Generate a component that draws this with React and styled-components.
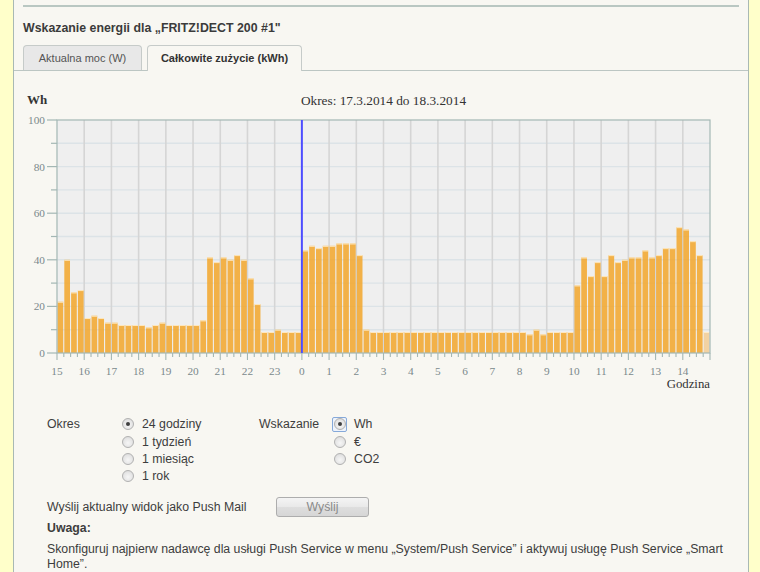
import React from 'react';
import styled, { createGlobalStyle } from 'styled-components';

const GlobalStyle = createGlobalStyle`
  html, body {
    margin: 0;
    padding: 0;
    background: #ffffca;
  }
  body {
    font-family: 'Liberation Sans', Arial, sans-serif;
  }
`;

const Page = styled.div`
  display: flex;
  height: 572px;
  overflow: hidden;
`;

const Strip = styled.div`
  flex: 0 0 ${props => props.width}px;
  background: #ffffca;
`;

const Main = styled.div`
  flex: 1;
  display: flex;
  flex-direction: column;
  background: #f8f7f2;
  border-left: 1px solid #a9b9b4;
  border-right: 1px solid #a9b9b4;
`;

const TopRule = styled.div`
  height: 2px;
  margin: 5px 9px 0;
  background: #b9c7c2;
`;

const Title = styled.h1`
  margin: 14px 9px 0;
  font-size: 12.35px;
  line-height: 15px;
  font-weight: bold;
  color: #3b3b3b;
`;

const TabBar = styled.div`
  display: flex;
  align-items: flex-end;
  gap: 5px;
  height: 25px;
  margin-top: 9px;
  padding-left: 9px;
  border-bottom: 1px solid #bcc6c3;
`;

const Tab = styled.div`
  box-sizing: border-box;
  width: ${props => props.width}px;
  height: ${props => (props.active ? 26 : 25)}px;
  margin-bottom: ${props => (props.active ? -1 : 0)}px;
  display: flex;
  align-items: center;
  justify-content: center;
  padding-bottom: ${props => (props.active ? 1 : 0)}px;
  font-size: 11px;
  font-weight: ${props => (props.active ? 'bold' : 'normal')};
  color: ${props => (props.active ? '#333' : '#555')};
  background: ${props => (props.active ? '#f8f7f2' : '#e8e8e8')};
  border: 1px solid #c6cbc9;
  border-bottom: none;
  border-radius: 4px 4px 0 0;
`;

const ChartBox = styled.div`
  padding-top: 9px;

  svg {
    display: block;
  }
`;

const Form = styled.div`
  padding: 20px 9px 0 33px;
  color: #3d3d3d;
  font-size: 12.3px;
`;

const OptionRow = styled.div`
  display: flex;
`;

const OptionGroup = styled.div`
  display: flex;
  width: ${props => props.width || 'auto'};
`;

const GroupLabel = styled.div`
  flex: 0 0 73px;
  height: 17.3px;
  line-height: 17.3px;
`;

const OptionList = styled.div`
  display: flex;
  flex-direction: column;
`;

const Option = styled.label`
  display: flex;
  align-items: center;
  gap: 7px;
  height: 17.3px;
`;

const RadioSlot = styled.span`
  box-sizing: border-box;
  width: 15px;
  height: 15px;
  display: flex;
  align-items: center;
  justify-content: center;
  border: 1px solid ${props => (props.focused ? '#86a9d9' : 'transparent')};
  border-radius: 2px;
  background: ${props => (props.focused ? '#eef3fb' : 'transparent')};
`;

const Radio = styled.span`
  box-sizing: border-box;
  width: 12px;
  height: 12px;
  border-radius: 50%;
  border: 1px solid #b1b1b1;
  background: radial-gradient(circle at 50% 60%, #f6f6f6 0%, #e6e6e6 55%, #d4d4d4 100%);
  display: flex;
  align-items: center;
  justify-content: center;

  &::after {
    content: '';
    display: ${props => (props.checked ? 'block' : 'none')};
    width: 4px;
    height: 4px;
    border-radius: 50%;
    background: #3f3f3f;
  }
`;

const PushRow = styled.div`
  display: flex;
  align-items: center;
  margin-top: 12px;
`;

const PushText = styled.div`
  flex: 0 0 229px;
`;

const SendButton = styled.button`
  box-sizing: border-box;
  width: 93px;
  height: 20px;
  padding: 0;
  font-family: 'Liberation Sans', Arial, sans-serif;
  font-size: 12.3px;
  color: #8a8a8a;
  border: 1px solid #adadad;
  border-radius: 3px;
  background: linear-gradient(#f4f4f4, #e9e9e9 50%, #dedede 51%, #d6d6d6);
`;

const NoteHead = styled.div`
  margin-top: 4px;
  font-weight: bold;
  line-height: 15px;
`;

const NoteText = styled.p`
  margin: 6px 0 0;
  line-height: 15px;
`;

// 15-minutowe wartości od 15:00 do 15:00 następnego dnia
const values = [
  22, 40, 26, 27, 15, 16, 15, 13, 13, 12, 12, 12, 12, 11, 12, 13,
  12, 12, 12, 12, 12, 14, 41, 39, 41, 40, 42, 40, 32, 21, 9, 9,
  10, 9, 9, 9, 44, 46, 45, 46, 46, 47, 47, 47, 42, 10, 9, 9,
  9, 9, 9, 9, 9, 9, 9, 9, 9, 9, 9, 9, 9, 9, 9, 9,
  9, 9, 9, 9, 9, 8, 10, 8, 9, 9, 9, 9, 29, 41, 33, 39,
  33, 42, 39, 40, 41, 41, 44, 41, 42, 45, 45, 54, 53, 48, 42, 9,
];

const hours = [15, 16, 17, 18, 19, 20, 21, 22, 23, 0, 1, 2, 3, 4, 5, 6, 7, 8, 9, 10, 11, 12, 13, 14];

const L = 43;
const R = 696;
const T = 40;
const B = 273;
const HW = (R - L) / 24;
const Q = HW / 4;
const yOf = v => B - (v / 100) * (B - T);
const AXIS = '#a3b7b4';
const LABEL = '#7b898c';

const EnergyChart = () => (
  <svg width="734" height="316" viewBox="0 0 734 316">
    <rect x={L} y={T} width={R - L} height={B - T} fill="#efefef" />
    {[10, 20, 30, 40, 50, 60, 70, 80, 90].map(v => (
      <line key={`h${v}`} x1={L} x2={R} y1={yOf(v)} y2={yOf(v)} stroke="#dce3e7" strokeWidth="1.4" />
    ))}
    {hours.slice(1).map((h, i) =>
      i + 1 === 9 ? null : (
        <line key={`v${h}`} x1={L + (i + 1) * HW} x2={L + (i + 1) * HW} y1={T} y2={B} stroke="#d5d5d5" strokeWidth="1.6" />
      )
    )}
    {values.map((v, i) => {
      const x = L + i * Q + 0.5;
      const w = Q - 1.1;
      const pale = i === values.length - 1;
      return (
        <g key={`b${i}`}>
          <rect x={x} y={yOf(v)} width={w} height={B - yOf(v)} fill={pale ? 'rgba(243,190,110,0.6)' : 'rgba(243,163,35,0.82)'} />
          <line x1={x} x2={x + w} y1={yOf(v) + 0.5} y2={yOf(v) + 0.5} stroke="rgba(255,238,205,0.9)" strokeWidth="1" />
        </g>
      );
    })}
    <rect x={L} y={T} width={R - L} height={B - T} fill="none" stroke={AXIS} strokeWidth="1.2" />
    <line x1={L + 9 * HW} x2={L + 9 * HW} y1={T} y2={B} stroke="#4d4dff" strokeWidth="2" />
    {[0, 10, 20, 30, 40, 50, 60, 70, 80, 90, 100].map(v => (
      <line key={`yt${v}`} x1={v % 20 === 0 ? 33 : 37} x2={L} y1={yOf(v)} y2={yOf(v)} stroke={AXIS} strokeWidth="1.2" />
    ))}
    {[0, 20, 40, 60, 80, 100].map(v => (
      <text key={`yl${v}`} x="31" y={yOf(v) + 4} textAnchor="end" fontFamily="'Liberation Serif', serif" fontSize="11.3" fill={LABEL}>
        {v}
      </text>
    ))}
    {Array.from({ length: 97 }, (_, i) => (
      <line key={`xt${i}`} x1={L + i * Q} x2={L + i * Q} y1={B} y2={B + (i % 4 === 0 ? 7 : 4)} stroke={AXIS} strokeWidth="1.1" />
    ))}
    {hours.map((h, i) => (
      <text key={`xl${h}`} x={L + i * HW} y="294.5" textAnchor="middle" fontFamily="'Liberation Serif', serif" fontSize="11.3" fill={LABEL}>
        {h}
      </text>
    ))}
    <text x="13" y="24" fontFamily="'Liberation Serif', serif" fontSize="13" fontWeight="bold" fill="#333">Wh</text>
    <text x={(L + R) / 2} y="24.5" textAnchor="middle" fontFamily="'Liberation Serif', serif" fontSize="13.3" fill="#333">
      Okres: 17.3.2014 do 18.3.2014
    </text>
    <text x={R} y="308" textAnchor="end" fontFamily="'Liberation Serif', serif" fontSize="12.8" fill="#333">Godzina</text>
  </svg>
);

const RadioOption = ({ label, checked, focused }) => (
  <Option>
    <RadioSlot focused={focused}>
      <Radio checked={checked} />
    </RadioSlot>
    {label}
  </Option>
);

const periods = ['24 godziny', '1 tydzień', '1 miesiąc', '1 rok'];
const units = ['Wh', '€', 'CO2'];

const App = () => (
  <>
    <GlobalStyle />
    <Page>
      <Strip width={13} />
      <Main>
        <TopRule />
        <Title>Wskazanie energii dla „FRITZ!DECT 200 #1"</Title>
        <TabBar>
          <Tab width={119}>Aktualna moc (W)</Tab>
          <Tab width={155} active>Całkowite zużycie (kWh)</Tab>
        </TabBar>
        <ChartBox>
          <EnergyChart />
        </ChartBox>
        <Form>
          <OptionRow>
            <OptionGroup width="212px">
              <GroupLabel>Okres</GroupLabel>
              <OptionList>
                {periods.map((p, i) => (
                  <RadioOption key={p} label={p} checked={i === 0} />
                ))}
              </OptionList>
            </OptionGroup>
            <OptionGroup>
              <GroupLabel>Wskazanie</GroupLabel>
              <OptionList>
                {units.map((u, i) => (
                  <RadioOption key={u} label={u} checked={i === 0} focused={i === 0} />
                ))}
              </OptionList>
            </OptionGroup>
          </OptionRow>
          <PushRow>
            <PushText>Wyślij aktualny widok jako Push Mail</PushText>
            <SendButton>Wyślij</SendButton>
          </PushRow>
          <NoteHead>Uwaga:</NoteHead>
          <NoteText>
            Skonfiguruj najpierw nadawcę dla usługi Push Service w menu „System/Push Service” i aktywuj usługę Push Service „Smart Home”.
          </NoteText>
        </Form>
      </Main>
      <Strip width={11} />
    </Page>
  </>
);

export default App;
